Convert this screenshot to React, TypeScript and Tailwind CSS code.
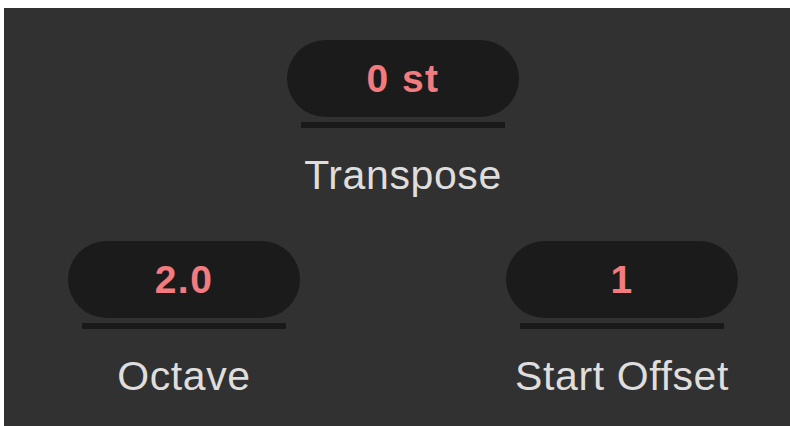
import React from 'react';

type ControlProps = {
  value: string;
  label: string;
};

function Control({ value, label }: ControlProps) {
  return (
    <div className="flex w-[232px] flex-col items-center">
      {/* value pill */}
      <div className="flex h-[77px] w-[232px] items-center justify-center rounded-full bg-[#1b1b1b]">
        <span className="text-[39px] font-bold leading-none tracking-[1.5px] text-[#f27b80]">{value}</span>
      </div>
      {/* underline */}
      <div className="mt-[5px] h-[6px] w-[204px] bg-[#191919]" />
      <div className="mt-[27px] whitespace-nowrap text-[41px] leading-none tracking-[0.6px] text-[#dedede]">{label}</div>
    </div>
  );
}

export default function App() {
  return (
    <div
      className="flex h-[426px] w-[790px] bg-white pl-[4px] pt-[8px]"
      style={{ fontFamily: '"Liberation Sans", Arial, sans-serif' }}
    >
      <div className="flex flex-1 flex-col bg-[#313131]">
        <div className="ml-[64px] flex w-[670px] flex-col pt-[32px]">
          <div className="flex justify-center">
            <Control value="0 st" label="Transpose" />
          </div>
          <div className="mt-[45px] flex justify-between">
            <Control value="2.0" label="Octave" />
            <Control value="1" label="Start Offset" />
          </div>
        </div>
      </div>
    </div>
  );
}
